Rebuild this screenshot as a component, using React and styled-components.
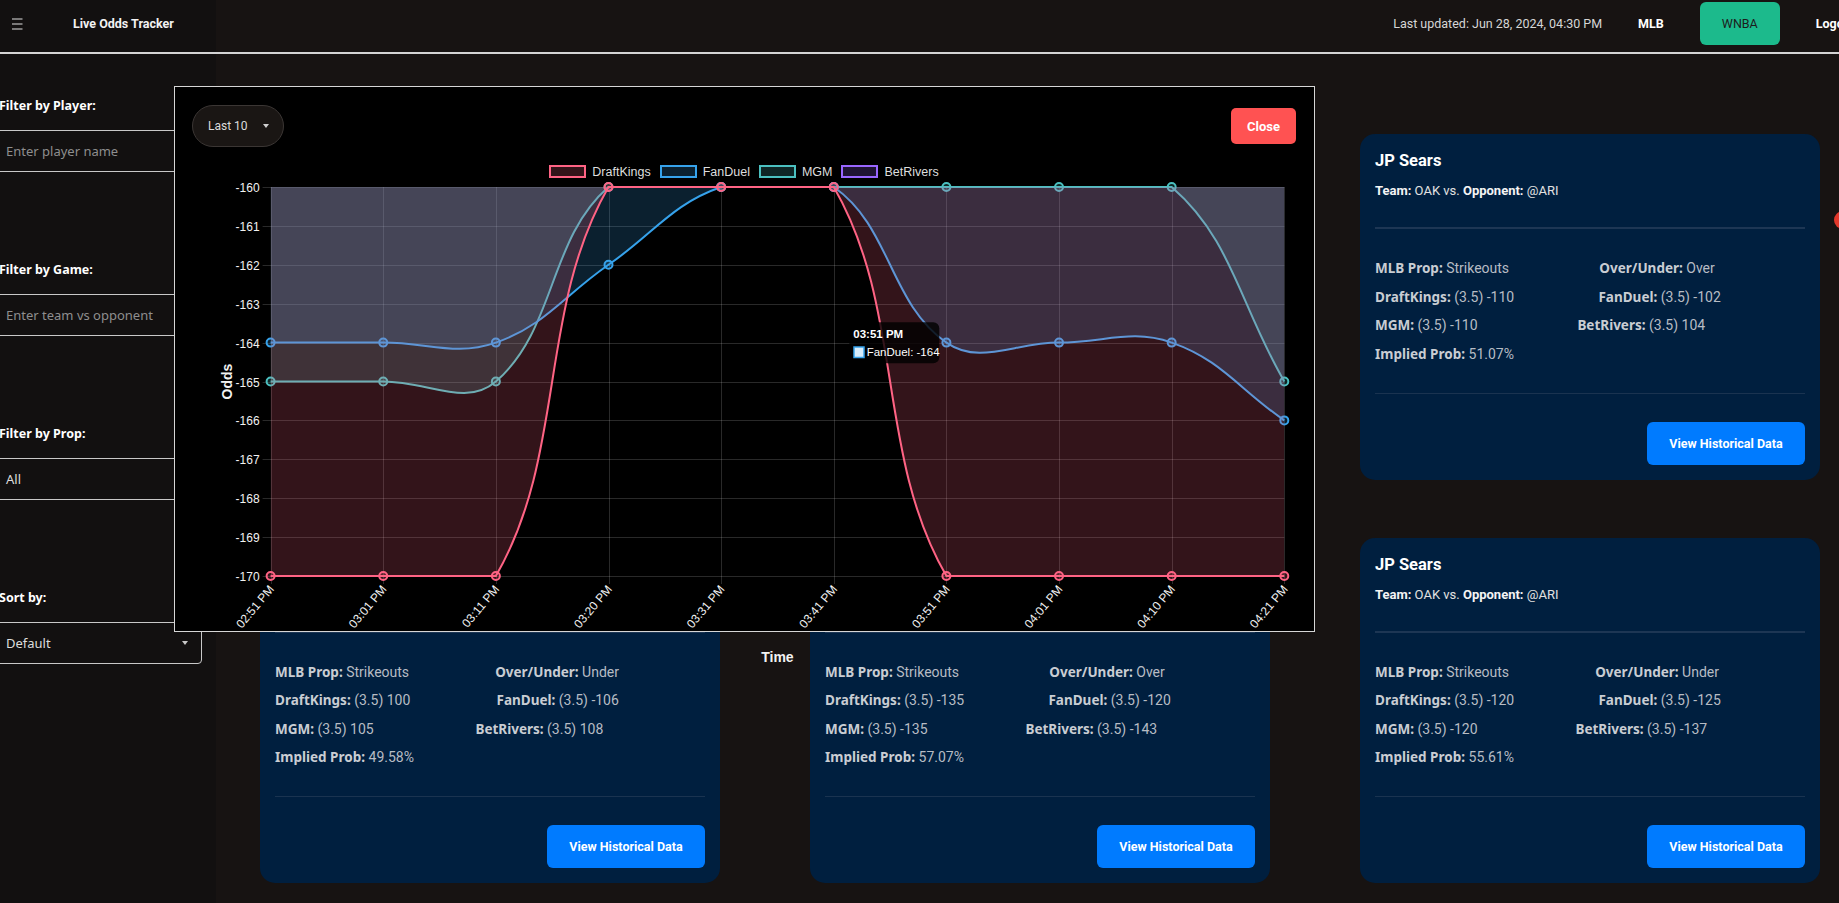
import React from "react";
import styled, { createGlobalStyle } from "styled-components";

const GlobalStyle = createGlobalStyle`
  html, body {
    margin: 0;
    padding: 0;
    overflow: hidden;
    background: #171312;
  }
  body {
    font-family: Roboto, "Noto Sans", sans-serif;
    color: #e4e4e4;
  }
  * {
    box-sizing: border-box;
  }
`;

const Page = styled.div`
  position: relative;
  width: 1839px;
  height: 903px;
  overflow: hidden;
  display: flex;
  flex-direction: column;
  background: #171312;
`;

const Header = styled.header`
  flex: none;
  width: 1895px;
  height: 54px;
  display: flex;
  align-items: stretch;
  border-bottom: 2px solid #d4d4d4;
  background: #171312;
`;

const Brand = styled.div`
  width: 216px;
  display: flex;
  align-items: center;
  gap: 50px;
  padding: 0 0 5px 12px;
  background: #121010;
  color: #f2f2f2;
  font-size: 12.5px;
  font-weight: 700;
`;

const HeaderRight = styled.div`
  margin-left: auto;
  display: flex;
  align-items: center;
  gap: 14px;
  padding: 0 18px 5px 0;
`;

const Updated = styled.span`
  font-size: 12.5px;
  color: #d6d6d6;
`;

const NavButton = styled.button`
  height: 43px;
  padding: 0 22px;
  border: none;
  border-radius: 6px;
  font-family: Roboto, sans-serif;
  font-size: 12.5px;
  font-weight: ${(p) => (p.active ? 400 : 700)};
  background: ${(p) => (p.active ? "#1cba8c" : "transparent")};
  color: ${(p) => (p.active ? "#1c1c1c" : "#ffffff")};
  cursor: pointer;
`;

const Body = styled.div`
  flex: 1;
  display: flex;
  min-height: 0;
`;

const Sidebar = styled.aside`
  width: 216px;
  flex: none;
  background: #121010;
  padding-top: 42.5px;
  display: flex;
  flex-direction: column;
  gap: 88.5px;
`;

const FilterGroup = styled.div`
  display: flex;
  flex-direction: column;
  gap: 15.5px;
`;

const FilterLabel = styled.label`
  margin-left: -1px;
  font-family: "Noto Sans", sans-serif;
  font-size: 12.5px;
  font-weight: 700;
  line-height: 18px;
  color: #ffffff;
`;

const TextInput = styled.input`
  width: 208px;
  height: 42px;
  margin-left: -6px;
  padding: 0 11px;
  border: 1px solid #c8c8c8;
  border-radius: 4px;
  background: transparent;
  font-family: "Noto Sans", sans-serif;
  font-size: 13px;
  color: #dddddd;
  outline: none;

  &::placeholder {
    color: #8e8e8e;
  }
`;

const SelectBox = styled.div`
  width: 208px;
  height: 42px;
  margin-left: -6px;
  padding: 0 13px 0 11px;
  border: 1px solid #c8c8c8;
  border-radius: 4px;
  display: flex;
  align-items: center;
  justify-content: space-between;
  font-family: "Noto Sans", sans-serif;
  font-size: 13px;
  color: #dddddd;
`;

const Caret = styled.span`
  width: 0;
  height: 0;
  border-left: 3.5px solid transparent;
  border-right: 3.5px solid transparent;
  border-top: 4px solid ${(p) => p.color || "#c8c8c8"};
`;

const Main = styled.main`
  flex: 1;
  padding: 80px 0 0 44px;
  display: grid;
  grid-template-columns: repeat(3, 460px);
  grid-auto-rows: max-content;
  column-gap: 90px;
  row-gap: 58px;
`;

const Card = styled.div`
  background: #001f3f;
  border-radius: 15px;
  padding: 16px 15px 15px;
  display: flex;
  flex-direction: column;
`;

const CardTitle = styled.h3`
  margin: 0;
  font-size: 16.5px;
  font-weight: 700;
  line-height: 22px;
  color: #ffffff;
`;

const TeamLine = styled.p`
  margin: 10px 0 0;
  font-size: 13px;
  line-height: 18px;
  color: #e2e2e2;

  strong {
    color: #f4f4f4;
    font-weight: 700;
  }
`;

const Divider = styled.div`
  height: ${(p) => (p.thick ? 2 : 1)}px;
  margin: ${(p) => p.space};
  background: ${(p) => (p.thick ? "#1d3654" : "#1a3350")};
`;

const Stats = styled.div`
  display: flex;
  flex-direction: column;
  gap: 10.5px;
`;

const StatRow = styled.div`
  display: flex;
`;

const Stat = styled.span`
  flex: 1 1 auto;
  white-space: nowrap;
  font-size: 14px;
  line-height: 18px;
  color: #b7bcc4;

  strong {
    font-family: "Noto Sans", sans-serif;
    font-size: 13.5px;
    font-weight: 700;
    color: #c9cdd3;
  }
`;

const HistoryButton = styled.button`
  align-self: flex-end;
  width: 158px;
  height: 43px;
  border: none;
  border-radius: 6px;
  background: #007bff;
  color: #ffffff;
  font-family: Roboto, sans-serif;
  font-size: 12.5px;
  font-weight: 700;
  cursor: pointer;
`;

const EdgeDot = styled.span`
  position: absolute;
  left: 1834px;
  top: 211px;
  width: 18px;
  height: 18px;
  border-radius: 50%;
  background: #e2382b;
`;

const Modal = styled.div`
  position: absolute;
  left: 174px;
  top: 86px;
  z-index: 10;
  width: 1141px;
  height: 546px;
  padding: 18px 18px 0 17px;
  background: #000000;
  border: 1px solid #d6d6d6;
  display: flex;
  flex-direction: column;
`;

const ModalHeader = styled.div`
  display: flex;
  align-items: center;
  justify-content: space-between;
`;

const RangePill = styled.div`
  width: 92px;
  height: 42px;
  border-radius: 21px;
  border: 1px solid #3b3634;
  background: #1a1614;
  display: flex;
  align-items: center;
  gap: 15px;
  padding-left: 15px;
  font-size: 12px;
  color: #dcdcdc;
`;

const CloseButton = styled.button`
  width: 65px;
  height: 36px;
  border: none;
  border-radius: 5px;
  background: #ff5252;
  color: #ffffff;
  font-family: Roboto, sans-serif;
  font-size: 13px;
  font-weight: 700;
  cursor: pointer;
`;

const Legend = styled.div`
  margin-top: 18px;
  height: 13px;
  display: flex;
  justify-content: center;
  align-items: center;
  gap: 9px;
`;

const LegendItem = styled.div`
  display: flex;
  align-items: center;
  gap: 6px;
  font-family: "Liberation Sans", Arial, sans-serif;
  font-size: 12.5px;
  color: #dedede;
`;

const Swatch = styled.span`
  width: 37px;
  height: 13px;
  border: 2px solid ${(p) => p.color};
  background: ${(p) => p.fill};
`;

const ChartSvg = styled.svg`
  display: block;
  overflow: visible;
  font-family: "Liberation Sans", Arial, sans-serif;
`;

const Hamburger = () => (
  <svg width="11" height="12" viewBox="0 0 11 12">
    <path d="M0 1h10.5M0 6h10.5M0 11h10.5" stroke="#e0e0e0" strokeWidth="1.2" />
  </svg>
);

const LABELS = ["02:51 PM", "03:01 PM", "03:11 PM", "03:20 PM", "03:31 PM", "03:41 PM", "03:51 PM", "04:01 PM", "04:10 PM", "04:21 PM"];

const SERIES = [
  { name: "DraftKings", color: "#ff6384", fill: "rgba(255,99,132,0.2)", data: [-170, -170, -170, -160, -160, -160, -170, -170, -170, -170] },
  { name: "FanDuel", color: "#36a2eb", fill: "rgba(54,162,235,0.2)", data: [-164, -164, -164, -162, -160, -160, -164, -164, -164, -166] },
  { name: "MGM", color: "#4bc0c0", fill: "rgba(75,192,192,0.2)", data: [-165, -165, -165, -160, -160, -160, -160, -160, -160, -165] },
  { name: "BetRivers", color: "#9966ff", fill: "rgba(153,102,255,0.2)", data: [] },
];

const Y_TICKS = [-160, -161, -162, -163, -164, -165, -166, -167, -168, -169, -170];
const PLOT = { left: 78.6, right: 1092.3, top: 9, bottom: 398 };
const GRID = "rgba(255,255,255,0.16)";
const xAt = (i) => PLOT.left + (i * (PLOT.right - PLOT.left)) / (LABELS.length - 1);
const yAt = (v) => PLOT.top + ((-160 - v) / 10) * (PLOT.bottom - PLOT.top);
const clamp = (v, lo, hi) => Math.min(Math.max(v, lo), hi);

// same control points as chart.js with tension 0.4 and capped to the chart area
function splinePath(pts, t = 0.4) {
  const n = pts.length;
  const cps = pts.map((p, i) => {
    const prev = pts[Math.max(i - 1, 0)];
    const next = pts[Math.min(i + 1, n - 1)];
    const d01 = Math.hypot(p.x - prev.x, p.y - prev.y);
    const d12 = Math.hypot(next.x - p.x, next.y - p.y);
    const sum = d01 + d12;
    const fa = sum ? (t * d01) / sum : 0;
    const fb = sum ? (t * d12) / sum : 0;
    const dx = next.x - prev.x;
    const dy = next.y - prev.y;
    return {
      c1x: clamp(p.x - fa * dx, PLOT.left, PLOT.right),
      c1y: clamp(p.y - fa * dy, PLOT.top, PLOT.bottom),
      c2x: clamp(p.x + fb * dx, PLOT.left, PLOT.right),
      c2y: clamp(p.y + fb * dy, PLOT.top, PLOT.bottom),
    };
  });
  let d = `M${pts[0].x},${pts[0].y}`;
  for (let i = 1; i < n; i++) {
    d += ` C${cps[i - 1].c2x},${cps[i - 1].c2y} ${cps[i].c1x},${cps[i].c1y} ${pts[i].x},${pts[i].y}`;
  }
  return d;
}

const OddsChart = () => {
  const drawn = SERIES.filter((s) => s.data.length).reverse();
  return (
    <ChartSvg width="1104" height="440">
      <defs>
        <clipPath id="plot-area">
          <rect x={PLOT.left} y={PLOT.top} width={PLOT.right - PLOT.left} height={PLOT.bottom - PLOT.top} />
        </clipPath>
      </defs>

      {Y_TICKS.map((v) => {
        const y = Math.round(yAt(v)) + 0.5;
        return (
          <g key={v}>
            <line x1={PLOT.left - 8} x2={PLOT.right} y1={y} y2={y} stroke={GRID} />
            <text x={PLOT.left - 11} y={y} textAnchor="end" dominantBaseline="central" fontSize="12" fill="#f2f2f2">
              {v}
            </text>
          </g>
        );
      })}
      {LABELS.map((label, i) => {
        const x = Math.round(xAt(i)) + 0.5;
        return (
          <g key={label}>
            <line x1={x} x2={x} y1={PLOT.top} y2={PLOT.bottom + 8} stroke={GRID} />
            <text
              transform={`translate(${xAt(i) + 1}, ${PLOT.bottom + 11}) rotate(-50)`}
              textAnchor="end"
              dominantBaseline="central"
              fontSize="12"
              fill="#f2f2f2"
            >
              {label}
            </text>
          </g>
        );
      })}

      <text transform={`translate(35, ${(PLOT.top + PLOT.bottom) / 2}) rotate(-90)`} textAnchor="middle" dominantBaseline="central" fontSize="14" fontWeight="bold" fill="#f2f2f2">
        Odds
      </text>
      <text x={(PLOT.left + PLOT.right) / 2} y="479" textAnchor="middle" dominantBaseline="central" fontSize="14" fontWeight="bold" fill="#f2f2f2">
        Time
      </text>

      {drawn.map((s) => {
        const pts = s.data.map((v, i) => ({ x: xAt(i), y: yAt(v) }));
        const line = splinePath(pts);
        const area = `${line} L${pts[pts.length - 1].x},${PLOT.top} L${pts[0].x},${PLOT.top} Z`;
        return (
          <g key={s.name}>
            <path d={area} fill={s.fill} clipPath="url(#plot-area)" />
            <path d={line} fill="none" stroke={s.color} strokeWidth="2" />
            {pts.map((p, i) => (
              <circle key={i} cx={p.x} cy={p.y} r="4" fill={s.fill} stroke={s.color} strokeWidth="2" />
            ))}
          </g>
        );
      })}

      <g>
        <rect x="657.3" y="144.3" width="90" height="41" rx="6" fill="rgba(0,0,0,0.8)" />
        <text x="661.3" y="155.5" dominantBaseline="central" fontSize="11.5" fontWeight="bold" fill="#ffffff">
          03:51 PM
        </text>
        <rect x="662" y="169" width="10" height="10.5" fill="#d7ecfb" stroke="#36a2eb" strokeWidth="1.5" />
        <text x="674.7" y="174" dominantBaseline="central" fontSize="11.5" fill="#ffffff">
          FanDuel: -164
        </text>
      </g>
    </ChartSvg>
  );
};

const CARDS = [
  { ou: "Over", dk: "-115", fd: "-110", mgm: "-115", br: "-112", prob: "52.38%" },
  { ou: "Under", dk: "-105", fd: "-108", mgm: "-105", br: "-110", prob: "51.22%" },
  { ou: "Over", dk: "-110", fd: "-102", mgm: "-110", br: "104", prob: "51.07%" },
  { ou: "Under", dk: "100", fd: "-106", mgm: "105", br: "108", prob: "49.58%" },
  { ou: "Over", dk: "-135", fd: "-120", mgm: "-135", br: "-143", prob: "57.07%" },
  { ou: "Under", dk: "-120", fd: "-125", mgm: "-120", br: "-137", prob: "55.61%" },
];

const PropCard = ({ card }) => (
  <Card>
    <CardTitle>JP Sears</CardTitle>
    <TeamLine>
      <strong>Team:</strong> OAK vs. <strong>Opponent:</strong> @ARI
    </TeamLine>
    <Divider thick space="27px 0 30px" />
    <Stats>
      <StatRow>
        <Stat><strong>MLB Prop:</strong> Strikeouts</Stat>
        <Stat><strong>Over/Under:</strong> {card.ou}</Stat>
      </StatRow>
      <StatRow>
        <Stat><strong>DraftKings:</strong> (3.5) {card.dk}</Stat>
        <Stat><strong>FanDuel:</strong> (3.5) {card.fd}</Stat>
      </StatRow>
      <StatRow>
        <Stat><strong>MGM:</strong> (3.5) {card.mgm}</Stat>
        <Stat><strong>BetRivers:</strong> (3.5) {card.br}</Stat>
      </StatRow>
      <StatRow>
        <Stat><strong>Implied Prob:</strong> {card.prob}</Stat>
      </StatRow>
    </Stats>
    <Divider space="30px 0 28px" />
    <HistoryButton>View Historical Data</HistoryButton>
  </Card>
);

const App = () => (
  <Page>
    <GlobalStyle />
    <Header>
      <Brand>
        <Hamburger />
        Live Odds Tracker
      </Brand>
      <HeaderRight>
        <Updated>Last updated: Jun 28, 2024, 04:30 PM</Updated>
        <NavButton>MLB</NavButton>
        <NavButton active>WNBA</NavButton>
        <NavButton>Logout</NavButton>
      </HeaderRight>
    </Header>
    <Body>
      <Sidebar>
        <FilterGroup>
          <FilterLabel>Filter by Player:</FilterLabel>
          <TextInput placeholder="Enter player name" />
        </FilterGroup>
        <FilterGroup>
          <FilterLabel>Filter by Game:</FilterLabel>
          <TextInput placeholder="Enter team vs opponent" />
        </FilterGroup>
        <FilterGroup>
          <FilterLabel>Filter by Prop:</FilterLabel>
          <SelectBox>
            All
            <Caret />
          </SelectBox>
        </FilterGroup>
        <FilterGroup>
          <FilterLabel>Sort by:</FilterLabel>
          <SelectBox>
            Default
            <Caret />
          </SelectBox>
        </FilterGroup>
      </Sidebar>
      <Main>
        {CARDS.map((card, i) => (
          <PropCard key={i} card={card} />
        ))}
      </Main>
    </Body>
    <EdgeDot />
    <Modal>
      <ModalHeader>
        <RangePill>
          Last 10
          <Caret color="#d0d0d0" />
        </RangePill>
        <CloseButton>Close</CloseButton>
      </ModalHeader>
      <Legend>
        {SERIES.map((s) => (
          <LegendItem key={s.name}>
            <Swatch color={s.color} fill={s.fill} />
            {s.name}
          </LegendItem>
        ))}
      </Legend>
      <OddsChart />
    </Modal>
  </Page>
);

export default App;
